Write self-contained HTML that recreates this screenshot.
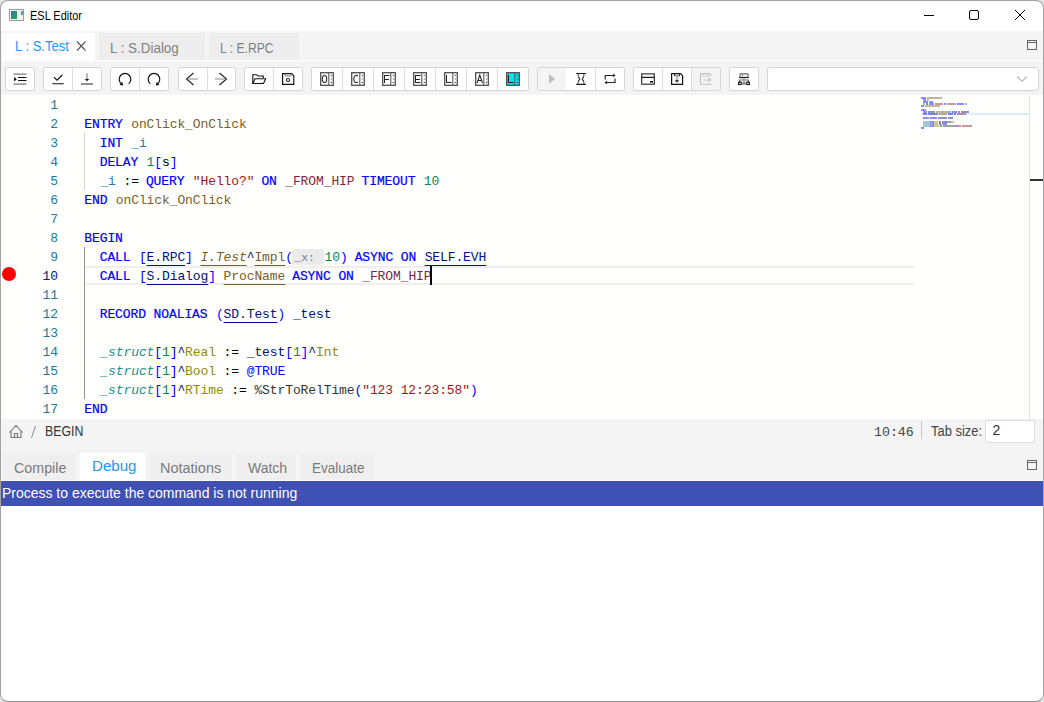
<!DOCTYPE html>
<html><head><meta charset="utf-8"><style>
html,body{margin:0;padding:0;width:1044px;height:702px;overflow:hidden;background:#e4e4e4;}
body{position:relative;font-family:"Liberation Sans",sans-serif;}
.abs{position:absolute;}
#win{position:absolute;left:0;top:0;width:1042px;height:700px;border:1px solid #a3a3a3;border-bottom-color:#8e8e8e;border-radius:8px;overflow:hidden;background:#fff;}
/* all children are positioned relative to page coords: win has border 1, so offset -1 */
#in{position:absolute;left:-1px;top:-1px;width:1044px;height:702px;}
.title{left:30px;top:7px;font-size:12.3px;color:#000;white-space:nowrap;}
.tabbar{left:0;top:31px;width:1044px;height:30px;background:#f4f4f4;}
.wline{left:0;top:60px;width:1044px;height:1px;background:#fff;}
.tab{top:33px;height:27px;background:#ededed;}
.tab.act{background:#fff;height:28px;}
.tabt{font-size:13.6px;color:#808080;white-space:nowrap;}
.tabt.act{color:#2196f3;}
.toolbar{left:0;top:61px;width:1044px;height:34px;background:#f4f4f4;}
.grp{top:67px;height:22px;border:1px solid #d4d4d4;border-radius:2.5px;background:#fff;overflow:hidden;}
.div{top:0;width:1px;height:22px;background:#dcdcdc;}
.dis{top:0;height:22px;background:#f4f4f4;}
.combo{left:767px;top:67px;width:270px;height:22px;border:1px solid #d4d4d4;border-radius:3px;background:#fff;}
.editor{left:0;top:95px;width:1044px;height:324px;background:#fffffe;overflow:hidden;}
.ln{position:absolute;left:85px;height:19px;line-height:19px;font-family:"Liberation Mono",monospace;font-size:13px;letter-spacing:-0.104px;white-space:pre;color:#000;padding-top:1px;box-sizing:border-box;}
.lnum{position:absolute;left:20px;width:38px;text-align:right;height:19px;line-height:19px;font-family:"Liberation Mono",monospace;font-size:13px;letter-spacing:-0.104px;color:#237893;padding-top:1px;box-sizing:border-box;}
.lnum.cur{color:#0b216f;}
.kw{color:#0000ff;font-weight:normal;-webkit-text-stroke:0.22px #0000ff;position:relative;left:-0.7px;}
.fn{color:#795e26;}
.var{color:#2a78b0;}
.num{color:#098658;}
.br{color:#0000ff;}
.str{color:#a31515;}
.mar{color:#811f3f;}
.navy{color:#001080;}
.uln{color:#001080;text-decoration:underline;text-decoration-thickness:1px;text-underline-offset:4px;}
.itb{color:#795e26;font-style:italic;text-decoration:underline;text-decoration-thickness:1px;text-underline-offset:4px;}
.ulb{color:#795e26;text-decoration:underline;text-decoration-thickness:1px;text-underline-offset:4px;}
.teal{color:#23908a;font-style:italic;}
.olv{color:#8f8c00;}
.at{color:#0000ff;}
.dark{color:#333;}
.hint{display:inline-block;box-sizing:border-box;background:#ebebeb;color:#7d7d7d;border-radius:3px;width:31.6px;margin-left:-0.6px;margin-right:0.6px;height:16px;line-height:16px;padding-top:1px;padding-left:2px;vertical-align:top;margin-top:1px;font-size:11.5px;letter-spacing:0;}
.mini{position:absolute;left:921px;top:95px;}
.status{left:0;top:419px;width:1044px;height:62px;background:#f4f4f4;}
.bluebar{left:0;top:481px;width:1044px;height:25px;background:#3f51b5;}
.btab{top:453px;height:27px;background:#efefef;}
.btab.act{background:#fff;}
.btabt{font-size:13.6px;color:#7a7a7a;white-space:nowrap;}
.btabt.act{color:#2196f3;}
.ui{font-size:13.6px;white-space:nowrap;}

.t{line-height:1;white-space:pre;transform-origin:0 0;}

</style></head><body>
<div id="win"><div id="in">
<!-- title bar -->
<svg class="abs" style="left:0;top:0" width="1044" height="31">
  <rect x="9.5" y="9.5" width="14" height="11" fill="#f4f4f4" stroke="#9a9a9a" stroke-width="1"/>
  <defs><linearGradient id="g1" x1="0" y1="0" x2="1" y2="1"><stop offset="0" stop-color="#3a6fb0"/><stop offset="1" stop-color="#22b04a"/></linearGradient></defs>
  <rect x="11" y="11" width="6" height="8" fill="url(#g1)"/>
  <rect x="21" y="11" width="2" height="4" fill="#4fa0a0"/>
  <rect x="18.5" y="12" width="2" height="1" fill="#ddd"/>
  <path d="M924 15.5H934" stroke="#000" stroke-width="1"/>
  <rect x="969.5" y="10.5" width="9" height="9" rx="1.5" fill="none" stroke="#000" stroke-width="1"/>
  <path d="M1015 10L1025 20M1025 10L1015 20" stroke="#000" stroke-width="1"/>
</svg>


<!-- tab bar -->
<div class="abs tabbar"></div>
<div class="abs wline"></div>
<div class="abs tab act" style="left:2px;width:93px"></div>
<div class="abs tab" style="left:99px;width:106px"></div>
<div class="abs tab" style="left:209px;width:90px"></div>



<svg class="abs" style="left:0;top:31px" width="1044" height="30">
  <path d="M77 10.5L85.5 19.5M85.5 10.5L77 19.5" stroke="#555" stroke-width="1.1"/>
  <rect x="1027.5" y="9.5" width="9" height="9" fill="none" stroke="#666" stroke-width="1"/>
  <path d="M1027.5 11.5H1036.5" stroke="#666" stroke-width="1"/>
</svg>

<!-- toolbar -->
<div class="abs toolbar"></div>
<div class="abs grp" style="left:5px;width:28px"></div>
<div class="abs grp" style="left:43px;width:57px"><div class="abs div" style="left:28px">
</div></div>
<div class="abs grp" style="left:110px;width:57px"><div class="abs div" style="left:28px">
</div></div>
<div class="abs grp" style="left:178px;width:56px"><div class="abs div" style="left:28px">
</div></div>
<div class="abs grp" style="left:244px;width:57px"><div class="abs div" style="left:28px">
</div></div>
<div class="abs grp" style="left:311px;width:216px">
  <div class="abs div" style="left:30px"></div><div class="abs div" style="left:61px"></div><div class="abs div" style="left:92px"></div>
  <div class="abs div" style="left:123px"></div><div class="abs div" style="left:154px"></div><div class="abs div" style="left:185px"></div>
</div>
<div class="abs grp" style="left:537px;width:86px"><div class="abs dis" style="left:0;width:28px"></div><div class="abs div" style="left:57px">
</div></div>
<div class="abs grp" style="left:633px;width:86px"><div class="abs div" style="left:28px"></div><div class="abs div" style="left:57px"></div><div class="abs dis" style="left:58px;width:28px">
</div></div>
<div class="abs grp" style="left:729px;width:28px"></div>
<div class="abs combo"></div>
<svg class="abs" style="left:0;top:0" width="1044" height="100" fill="none" stroke-linecap="butt">
 <!-- indent -->
 <path d="M13.5 74.2H26.5M13.5 84H26.5" stroke="#7a7a7a" stroke-width="1.25"/>
 <path d="M18 77.5H26.5M18 80.5H26.5" stroke="#111" stroke-width="1.1"/>
 <path d="M14 77V81.5L16.8 79.2Z" fill="#111"/>
 <!-- check underline -->
 <path d="M53.8 77.2L57 80.2L62.3 75" stroke="#111" stroke-width="1.1"/>
 <path d="M52.3 83.7H63.7" stroke="#111" stroke-width="1.1"/>
 <!-- arrow down line -->
 <path d="M87 73.3V79.5" stroke="#777" stroke-width="1.1"/>
 <path d="M84.8 79H89.2L87 81.3Z" fill="#111"/>
 <path d="M81 84H93" stroke="#222" stroke-width="1.2"/>
 <!-- undo / redo -->
 <path d="M128.7 83.7A5.8 5.8 0 1 0 121.3 83.7" stroke="#111" stroke-width="1.15"/>
 <path d="M123.2 85.4L119.6 85L122.2 81.8Z" fill="#111"/>
 <path d="M150.3 83.7A5.8 5.8 0 1 1 157.7 83.7" stroke="#111" stroke-width="1.15"/>
 <path d="M155.8 85.4L159.4 85L156.8 81.8Z" fill="#111"/>
 <!-- left/right arrows -->
 <path d="M193.5 73L186.5 79L193.5 85" stroke="#222" stroke-width="1.15"/>
 <path d="M187.5 79H198" stroke="#888" stroke-width="1.1"/>
 <path d="M219.5 73L226.5 79L219.5 85" stroke="#222" stroke-width="1.15"/>
 <path d="M215 79H225.5" stroke="#888" stroke-width="1.1"/>
 <!-- folder -->
 <path d="M252.8 83.5V74.7H256.5L258 76H263.3V78" stroke="#111" stroke-width="1.1"/>
 <path d="M252.8 83.5L255 78.7H265.7L263.5 83.5Z" stroke="#111" stroke-width="1.1" stroke-linejoin="round"/>
 <!-- floppy -->
 <path d="M282.6 73.6H291.7L293.8 75.7V84.3H282.6Z" stroke="#111" stroke-width="1.15"/>
 <path d="M285.2 73.6V75.9H291.1V73.6" stroke="#777" stroke-width="1"/>
 <circle cx="288" cy="80" r="1.6" stroke="#111" stroke-width="1"/>
 <!-- boxed letters -->
 <g stroke="#4a4a4a" stroke-width="1.25">
  <rect x="320.7" y="72.7" width="12.6" height="12.6"/>
  <rect x="351.7" y="72.7" width="12.6" height="12.6"/>
  <rect x="382.7" y="72.7" width="12.6" height="12.6"/>
  <rect x="413.7" y="72.7" width="12.6" height="12.6"/>
  <rect x="444.7" y="72.7" width="12.6" height="12.6"/>
  <rect x="475.7" y="72.7" width="12.6" height="12.6"/>
  <rect x="506.7" y="72.7" width="12.6" height="12.6" fill="#00e5ee"/>
 </g>
 <g stroke="#5a5a5a" stroke-width="1.1">
  <path d="M328.8 73V85M359.8 73V85M390.8 73V85M421.8 73V85M452.8 73V85M483.8 73V85M514.8 73V85"/>
 </g>
 <g fill="#222">
  <circle cx="331.3" cy="75.5" r=".6"/><circle cx="331.3" cy="79" r=".5"/><circle cx="331.3" cy="82.4" r=".6"/>
  <circle cx="362.3" cy="75.5" r=".6"/><circle cx="362.3" cy="79" r=".5"/><circle cx="362.3" cy="82.4" r=".6"/>
  <circle cx="393.3" cy="75.5" r=".6"/><circle cx="393.3" cy="79" r=".5"/><circle cx="393.3" cy="82.4" r=".6"/>
  <circle cx="424.3" cy="75.5" r=".6"/><circle cx="424.3" cy="79" r=".5"/><circle cx="424.3" cy="82.4" r=".6"/>
  <circle cx="455.3" cy="75.5" r=".6"/><circle cx="455.3" cy="79" r=".5"/><circle cx="455.3" cy="82.4" r=".6"/>
  <circle cx="486.3" cy="75.5" r=".6"/><circle cx="486.3" cy="79" r=".5"/><circle cx="486.3" cy="82.4" r=".6"/>
  <circle cx="517.3" cy="75.5" r=".6"/><circle cx="517.3" cy="79" r=".5"/><circle cx="517.3" cy="82.4" r=".6"/>
 </g>
 <g fill="none" stroke="#222" stroke-width="1.05">
  <ellipse cx="324.5" cy="79" rx="2.2" ry="3.5"/>
  <path d="M357.8 76.2A2.5 3.6 0 1 0 357.8 81.8"/>
  <path d="M384.5 83V75.5H389.5 M384.5 79.5H389.0"/>
  <path d="M420.5 75.5H415.5V82.5H420.5 M415.5 79.5H420.0"/>
  <path d="M446.5 75V82.5H451.5"/>
  <path d="M477.1 83.2L479.8 75L482.5 83.2M478.0 80.5H481.6"/>
  <path d="M508.5 75V82.5H513.5"/>
 </g>
 <!-- play disabled -->
 <path d="M549 74V83.8L555 78.9Z" fill="#bdbdbd"/>
 <!-- hourglass -->
 <path d="M576.3 73.5H586M576.3 84.4H586" stroke="#1a1a1a" stroke-width="1.2"/>
 <path d="M578.1 74C578 77.3 579.6 77.8 579.6 79C579.6 80.2 578 80.7 578.1 84M583.9 74C584 77.3 582.4 77.8 582.4 79C582.4 80.2 584 80.7 583.9 84" stroke="#7a7a7a" stroke-width="1.5"/>
 <g fill="#111"><circle cx="578.5" cy="77.4" r=".5"/><circle cx="579.6" cy="79" r=".6"/><circle cx="578.5" cy="80.6" r=".5"/><circle cx="583.5" cy="77.4" r=".5"/><circle cx="582.4" cy="79" r=".6"/><circle cx="583.5" cy="80.6" r=".5"/></g>
 <!-- repeat -->
 <path d="M605.2 79.5V75.5H614.3M615 78.5V82.5H605.8" stroke="#222" stroke-width="1.15"/>
 <path d="M613.3 73.8L615.6 75.5L613.3 77.2Z M606.8 80.8L604.5 82.5L606.8 84.2Z" fill="#111"/>
 <!-- card -->
 <rect x="641.7" y="73.9" width="12.6" height="10.3" stroke="#222" stroke-width="1.1"/>
 <path d="M641.7 77.4H654.3" stroke="#1a1a1a" stroke-width="1.1"/>
 <rect x="650" y="81" width="3" height="1.6" fill="#111"/>
 <!-- floppy T -->
 <path d="M671.6 73.6H680.6L682.6 75.6V84.4H671.6Z" stroke="#111" stroke-width="1.2" stroke-linejoin="round"/>
 <path d="M674.6 73.6V76.2M679.4 73.6V76.2" stroke="#222" stroke-width="1"/>
 <path d="M675 75.8H679M677 76V80.5" stroke="#777" stroke-width="1.1"/>
 <path d="M674.8 80.2H679.2L677 82.6Z" fill="#111"/>
 <!-- disabled floppy arrow -->
 <path d="M700.5 84.3V73.6H709.5L711.6 75.7" stroke="#c2c2c2" stroke-width="1.1"/>
 <path d="M700.5 84.3H711.8" stroke="#c2c2c2" stroke-width="1.1"/>
 <path d="M703.6 73.6V76H708.6V73.6" stroke="#cfcfcf" stroke-width="1.1"/>
 <path d="M703.4 80H710.2M708.5 78L710.6 80L708.5 82" stroke="#c4c4c4" stroke-width="1.1"/>
 <!-- hierarchy -->
 <rect x="739.9" y="73.9" width="8.2" height="3.6" rx="0.8" stroke="#8d8d8d" stroke-width="1.6"/>
 <path d="M739.2 77.5H748.8" stroke="#1a1a1a" stroke-width="1.1"/>
 <rect x="742" y="74.9" width="0.9" height="0.9" fill="#333"/>
 <path d="M744 78V82" stroke="#999" stroke-width="1.2"/>
 <path d="M739.2 80H748.8" stroke="#999" stroke-width="1.4"/>
 <path d="M739.6 80.5V82.2M748.4 80.5V82.2" stroke="#111" stroke-width="1"/>
 <rect x="738.6" y="82.2" width="2.6" height="2.3" stroke="#111" stroke-width="1.1"/>
 <rect x="742.2" y="81.8" width="3.6" height="3.1" fill="#8e8e8e"/>
 <rect x="746.8" y="82.2" width="2.6" height="2.3" stroke="#111" stroke-width="1.1"/>
 <!-- combo chevron -->
 <path d="M1017.3 76.5L1022 81.5L1026.7 76.5" stroke="#b8b8b8" stroke-width="1.1"/>
</svg>


<!-- editor -->
<div class="abs editor"></div>
<div class="abs" style="left:86px;top:266px;width:828px;height:19px;box-sizing:border-box;border-top:2px solid #eeeeee;border-bottom:2px solid #eeeeee"></div>
<div class="abs" style="left:84px;top:133px;width:1px;height:57px;background:#d3d3d3"></div>
<div class="abs" style="left:84px;top:247px;width:1px;height:152px;background:#939393"></div>
<div class="abs" style="left:2px;top:267px;width:14px;height:14px;border-radius:50%;background:#ff0000"></div>
<div class="ln" style="top:95px"></div>
<div class="lnum" style="top:95px">1</div>
<div class="ln" style="top:114px"><span class="kw">ENTRY</span><span class="blk"> </span><span class="fn">onClick_OnClick</span></div>
<div class="lnum" style="top:114px">2</div>
<div class="ln" style="top:133px"><span class="blk">  </span><span class="kw">INT</span><span class="blk"> </span><span class="var">_i</span></div>
<div class="lnum" style="top:133px">3</div>
<div class="ln" style="top:152px"><span class="blk">  </span><span class="kw">DELAY</span><span class="blk"> </span><span class="num">1</span><span class="br">[</span><span class="blk">s</span><span class="br">]</span></div>
<div class="lnum" style="top:152px">4</div>
<div class="ln" style="top:171px"><span class="blk">  </span><span class="var">_i</span><span class="blk"> := </span><span class="kw">QUERY</span><span class="blk"> </span><span class="str">&quot;Hello?&quot;</span><span class="blk"> </span><span class="kw">ON</span><span class="blk"> </span><span class="mar">_FROM_HIP</span><span class="blk"> </span><span class="kw">TIMEOUT</span><span class="blk"> </span><span class="num">10</span></div>
<div class="lnum" style="top:171px">5</div>
<div class="ln" style="top:190px"><span class="kw">END</span><span class="blk"> </span><span class="fn">onClick_OnClick</span></div>
<div class="lnum" style="top:190px">6</div>
<div class="ln" style="top:209px"></div>
<div class="lnum" style="top:209px">7</div>
<div class="ln" style="top:228px"><span class="kw">BEGIN</span></div>
<div class="lnum" style="top:228px">8</div>
<div class="ln" style="top:247px"><span class="blk">  </span><span class="kw">CALL</span><span class="blk"> </span><span class="br">[</span><span class="uln">E.RPC</span><span class="br">]</span><span class="blk"> </span><span class="itb">I.Test</span><span class="navy">^</span><span class="ulb">Impl</span><span class="br">(</span><span class="hint">_x: </span><span class="num">10</span><span class="br">)</span><span class="blk"> </span><span class="kw">ASYNC</span><span class="blk"> </span><span class="kw">ON</span><span class="blk"> </span><span class="uln">SELF.EVH</span></div>
<div class="lnum" style="top:247px">9</div>
<div class="ln" style="top:266px"><span class="blk">  </span><span class="kw">CALL</span><span class="blk"> </span><span class="br">[</span><span class="uln">S.Dialog</span><span class="br">]</span><span class="blk"> </span><span class="ulb">ProcName</span><span class="blk"> </span><span class="kw">ASYNC</span><span class="blk"> </span><span class="kw">ON</span><span class="blk"> </span><span class="mar">_FROM_HIP</span></div>
<div class="lnum cur" style="top:266px">10</div>
<div class="ln" style="top:285px"></div>
<div class="lnum" style="top:285px">11</div>
<div class="ln" style="top:304px"><span class="blk">  </span><span class="kw">RECORD</span><span class="blk"> </span><span class="kw">NOALIAS</span><span class="blk"> </span><span class="br">(</span><span class="uln">SD.Test</span><span class="br">)</span><span class="blk"> </span><span class="navy">_test</span></div>
<div class="lnum" style="top:304px">12</div>
<div class="ln" style="top:323px"></div>
<div class="lnum" style="top:323px">13</div>
<div class="ln" style="top:342px"><span class="blk">  </span><span class="teal">_struct</span><span class="br">[</span><span class="num">1</span><span class="br">]</span><span class="navy">^</span><span class="olv">Real</span><span class="blk"> := </span><span class="navy">_test</span><span class="br">[</span><span class="num">1</span><span class="br">]</span><span class="navy">^</span><span class="olv">Int</span></div>
<div class="lnum" style="top:342px">14</div>
<div class="ln" style="top:361px"><span class="blk">  </span><span class="teal">_struct</span><span class="br">[</span><span class="num">1</span><span class="br">]</span><span class="navy">^</span><span class="olv">Bool</span><span class="blk"> := </span><span class="at">@TRUE</span></div>
<div class="lnum" style="top:361px">15</div>
<div class="ln" style="top:380px"><span class="blk">  </span><span class="teal">_struct</span><span class="br">[</span><span class="num">1</span><span class="br">]</span><span class="navy">^</span><span class="olv">RTime</span><span class="blk"> := </span><span class="dark">%StrToRelTime</span><span class="br">(</span><span class="str">&quot;123 12:23:58&quot;</span><span class="br">)</span></div>
<div class="lnum" style="top:380px">16</div>
<div class="ln" style="top:399px"><span class="kw">END</span></div>
<div class="lnum" style="top:399px">17</div>
<div class="abs" style="left:430px;top:266px;width:2px;height:19px;background:#000"></div>
<svg class="mini" width="108" height="40" viewBox="0 0 108 40" ><rect x="0" y="18" width="108" height="2" fill="#dceafc"/><g opacity="0.45" shape-rendering="crispEdges"><rect x="0" y="2" width="1" height="2" fill="#0000ff"/><rect x="1" y="2" width="1" height="2" fill="#0000ff"/><rect x="2" y="2" width="1" height="2" fill="#0000ff"/><rect x="3" y="2" width="1" height="2" fill="#0000ff"/><rect x="4" y="2" width="1" height="2" fill="#0000ff"/><rect x="6" y="2" width="1" height="2" fill="#795e26"/><rect x="7" y="2" width="1" height="2" fill="#795e26"/><rect x="8" y="2" width="1" height="2" fill="#795e26"/><rect x="9" y="2" width="1" height="2" fill="#795e26"/><rect x="10" y="2" width="1" height="2" fill="#795e26"/><rect x="11" y="2" width="1" height="2" fill="#795e26"/><rect x="12" y="2" width="1" height="2" fill="#795e26"/><rect x="13" y="2" width="1" height="2" fill="#795e26"/><rect x="14" y="2" width="1" height="2" fill="#795e26"/><rect x="15" y="2" width="1" height="2" fill="#795e26"/><rect x="16" y="2" width="1" height="2" fill="#795e26"/><rect x="17" y="2" width="1" height="2" fill="#795e26"/><rect x="18" y="2" width="1" height="2" fill="#795e26"/><rect x="19" y="2" width="1" height="2" fill="#795e26"/><rect x="20" y="2" width="1" height="2" fill="#795e26"/><rect x="2" y="4" width="1" height="2" fill="#0000ff"/><rect x="3" y="4" width="1" height="2" fill="#0000ff"/><rect x="4" y="4" width="1" height="2" fill="#0000ff"/><rect x="6" y="4" width="1" height="2" fill="#2a78b0"/><rect x="7" y="4" width="1" height="2" fill="#2a78b0"/><rect x="2" y="6" width="1" height="2" fill="#0000ff"/><rect x="3" y="6" width="1" height="2" fill="#0000ff"/><rect x="4" y="6" width="1" height="2" fill="#0000ff"/><rect x="5" y="6" width="1" height="2" fill="#0000ff"/><rect x="6" y="6" width="1" height="2" fill="#0000ff"/><rect x="8" y="6" width="1" height="2" fill="#098658"/><rect x="9" y="6" width="1" height="2" fill="#0000ff"/><rect x="10" y="6" width="1" height="2" fill="#000000"/><rect x="11" y="6" width="1" height="2" fill="#0000ff"/><rect x="2" y="8" width="1" height="2" fill="#2a78b0"/><rect x="3" y="8" width="1" height="2" fill="#2a78b0"/><rect x="5" y="8" width="1" height="2" fill="#000000"/><rect x="6" y="8" width="1" height="2" fill="#000000"/><rect x="8" y="8" width="1" height="2" fill="#0000ff"/><rect x="9" y="8" width="1" height="2" fill="#0000ff"/><rect x="10" y="8" width="1" height="2" fill="#0000ff"/><rect x="11" y="8" width="1" height="2" fill="#0000ff"/><rect x="12" y="8" width="1" height="2" fill="#0000ff"/><rect x="14" y="8" width="1" height="2" fill="#a31515"/><rect x="15" y="8" width="1" height="2" fill="#a31515"/><rect x="16" y="8" width="1" height="2" fill="#a31515"/><rect x="17" y="8" width="1" height="2" fill="#a31515"/><rect x="18" y="8" width="1" height="2" fill="#a31515"/><rect x="19" y="8" width="1" height="2" fill="#a31515"/><rect x="20" y="8" width="1" height="2" fill="#a31515"/><rect x="21" y="8" width="1" height="2" fill="#a31515"/><rect x="23" y="8" width="1" height="2" fill="#0000ff"/><rect x="24" y="8" width="1" height="2" fill="#0000ff"/><rect x="26" y="8" width="1" height="2" fill="#811f3f"/><rect x="27" y="8" width="1" height="2" fill="#811f3f"/><rect x="28" y="8" width="1" height="2" fill="#811f3f"/><rect x="29" y="8" width="1" height="2" fill="#811f3f"/><rect x="30" y="8" width="1" height="2" fill="#811f3f"/><rect x="31" y="8" width="1" height="2" fill="#811f3f"/><rect x="32" y="8" width="1" height="2" fill="#811f3f"/><rect x="33" y="8" width="1" height="2" fill="#811f3f"/><rect x="34" y="8" width="1" height="2" fill="#811f3f"/><rect x="36" y="8" width="1" height="2" fill="#0000ff"/><rect x="37" y="8" width="1" height="2" fill="#0000ff"/><rect x="38" y="8" width="1" height="2" fill="#0000ff"/><rect x="39" y="8" width="1" height="2" fill="#0000ff"/><rect x="40" y="8" width="1" height="2" fill="#0000ff"/><rect x="41" y="8" width="1" height="2" fill="#0000ff"/><rect x="42" y="8" width="1" height="2" fill="#0000ff"/><rect x="44" y="8" width="1" height="2" fill="#098658"/><rect x="45" y="8" width="1" height="2" fill="#098658"/><rect x="0" y="10" width="1" height="2" fill="#0000ff"/><rect x="1" y="10" width="1" height="2" fill="#0000ff"/><rect x="2" y="10" width="1" height="2" fill="#0000ff"/><rect x="4" y="10" width="1" height="2" fill="#795e26"/><rect x="5" y="10" width="1" height="2" fill="#795e26"/><rect x="6" y="10" width="1" height="2" fill="#795e26"/><rect x="7" y="10" width="1" height="2" fill="#795e26"/><rect x="8" y="10" width="1" height="2" fill="#795e26"/><rect x="9" y="10" width="1" height="2" fill="#795e26"/><rect x="10" y="10" width="1" height="2" fill="#795e26"/><rect x="11" y="10" width="1" height="2" fill="#795e26"/><rect x="12" y="10" width="1" height="2" fill="#795e26"/><rect x="13" y="10" width="1" height="2" fill="#795e26"/><rect x="14" y="10" width="1" height="2" fill="#795e26"/><rect x="15" y="10" width="1" height="2" fill="#795e26"/><rect x="16" y="10" width="1" height="2" fill="#795e26"/><rect x="17" y="10" width="1" height="2" fill="#795e26"/><rect x="18" y="10" width="1" height="2" fill="#795e26"/><rect x="0" y="14" width="1" height="2" fill="#0000ff"/><rect x="1" y="14" width="1" height="2" fill="#0000ff"/><rect x="2" y="14" width="1" height="2" fill="#0000ff"/><rect x="3" y="14" width="1" height="2" fill="#0000ff"/><rect x="4" y="14" width="1" height="2" fill="#0000ff"/><rect x="2" y="16" width="1" height="2" fill="#0000ff"/><rect x="3" y="16" width="1" height="2" fill="#0000ff"/><rect x="4" y="16" width="1" height="2" fill="#0000ff"/><rect x="5" y="16" width="1" height="2" fill="#0000ff"/><rect x="7" y="16" width="1" height="2" fill="#0000ff"/><rect x="8" y="16" width="1" height="2" fill="#001080"/><rect x="9" y="16" width="1" height="2" fill="#001080"/><rect x="10" y="16" width="1" height="2" fill="#001080"/><rect x="11" y="16" width="1" height="2" fill="#001080"/><rect x="12" y="16" width="1" height="2" fill="#001080"/><rect x="13" y="16" width="1" height="2" fill="#0000ff"/><rect x="15" y="16" width="1" height="2" fill="#795e26"/><rect x="16" y="16" width="1" height="2" fill="#795e26"/><rect x="17" y="16" width="1" height="2" fill="#795e26"/><rect x="18" y="16" width="1" height="2" fill="#795e26"/><rect x="19" y="16" width="1" height="2" fill="#795e26"/><rect x="20" y="16" width="1" height="2" fill="#795e26"/><rect x="21" y="16" width="1" height="2" fill="#001080"/><rect x="22" y="16" width="1" height="2" fill="#795e26"/><rect x="23" y="16" width="1" height="2" fill="#795e26"/><rect x="24" y="16" width="1" height="2" fill="#795e26"/><rect x="25" y="16" width="1" height="2" fill="#795e26"/><rect x="26" y="16" width="1" height="2" fill="#0000ff"/><rect x="27" y="16" width="1" height="2" fill="#098658"/><rect x="28" y="16" width="1" height="2" fill="#098658"/><rect x="29" y="16" width="1" height="2" fill="#0000ff"/><rect x="31" y="16" width="1" height="2" fill="#0000ff"/><rect x="32" y="16" width="1" height="2" fill="#0000ff"/><rect x="33" y="16" width="1" height="2" fill="#0000ff"/><rect x="34" y="16" width="1" height="2" fill="#0000ff"/><rect x="35" y="16" width="1" height="2" fill="#0000ff"/><rect x="37" y="16" width="1" height="2" fill="#0000ff"/><rect x="38" y="16" width="1" height="2" fill="#0000ff"/><rect x="40" y="16" width="1" height="2" fill="#001080"/><rect x="41" y="16" width="1" height="2" fill="#001080"/><rect x="42" y="16" width="1" height="2" fill="#001080"/><rect x="43" y="16" width="1" height="2" fill="#001080"/><rect x="44" y="16" width="1" height="2" fill="#001080"/><rect x="45" y="16" width="1" height="2" fill="#001080"/><rect x="46" y="16" width="1" height="2" fill="#001080"/><rect x="47" y="16" width="1" height="2" fill="#001080"/><rect x="2" y="18" width="1" height="2" fill="#0000ff"/><rect x="3" y="18" width="1" height="2" fill="#0000ff"/><rect x="4" y="18" width="1" height="2" fill="#0000ff"/><rect x="5" y="18" width="1" height="2" fill="#0000ff"/><rect x="7" y="18" width="1" height="2" fill="#0000ff"/><rect x="8" y="18" width="1" height="2" fill="#001080"/><rect x="9" y="18" width="1" height="2" fill="#001080"/><rect x="10" y="18" width="1" height="2" fill="#001080"/><rect x="11" y="18" width="1" height="2" fill="#001080"/><rect x="12" y="18" width="1" height="2" fill="#001080"/><rect x="13" y="18" width="1" height="2" fill="#001080"/><rect x="14" y="18" width="1" height="2" fill="#001080"/><rect x="15" y="18" width="1" height="2" fill="#001080"/><rect x="16" y="18" width="1" height="2" fill="#0000ff"/><rect x="18" y="18" width="1" height="2" fill="#795e26"/><rect x="19" y="18" width="1" height="2" fill="#795e26"/><rect x="20" y="18" width="1" height="2" fill="#795e26"/><rect x="21" y="18" width="1" height="2" fill="#795e26"/><rect x="22" y="18" width="1" height="2" fill="#795e26"/><rect x="23" y="18" width="1" height="2" fill="#795e26"/><rect x="24" y="18" width="1" height="2" fill="#795e26"/><rect x="25" y="18" width="1" height="2" fill="#795e26"/><rect x="27" y="18" width="1" height="2" fill="#0000ff"/><rect x="28" y="18" width="1" height="2" fill="#0000ff"/><rect x="29" y="18" width="1" height="2" fill="#0000ff"/><rect x="30" y="18" width="1" height="2" fill="#0000ff"/><rect x="31" y="18" width="1" height="2" fill="#0000ff"/><rect x="33" y="18" width="1" height="2" fill="#0000ff"/><rect x="34" y="18" width="1" height="2" fill="#0000ff"/><rect x="36" y="18" width="1" height="2" fill="#811f3f"/><rect x="37" y="18" width="1" height="2" fill="#811f3f"/><rect x="38" y="18" width="1" height="2" fill="#811f3f"/><rect x="39" y="18" width="1" height="2" fill="#811f3f"/><rect x="40" y="18" width="1" height="2" fill="#811f3f"/><rect x="41" y="18" width="1" height="2" fill="#811f3f"/><rect x="42" y="18" width="1" height="2" fill="#811f3f"/><rect x="43" y="18" width="1" height="2" fill="#811f3f"/><rect x="44" y="18" width="1" height="2" fill="#811f3f"/><rect x="2" y="22" width="1" height="2" fill="#0000ff"/><rect x="3" y="22" width="1" height="2" fill="#0000ff"/><rect x="4" y="22" width="1" height="2" fill="#0000ff"/><rect x="5" y="22" width="1" height="2" fill="#0000ff"/><rect x="6" y="22" width="1" height="2" fill="#0000ff"/><rect x="7" y="22" width="1" height="2" fill="#0000ff"/><rect x="9" y="22" width="1" height="2" fill="#0000ff"/><rect x="10" y="22" width="1" height="2" fill="#0000ff"/><rect x="11" y="22" width="1" height="2" fill="#0000ff"/><rect x="12" y="22" width="1" height="2" fill="#0000ff"/><rect x="13" y="22" width="1" height="2" fill="#0000ff"/><rect x="14" y="22" width="1" height="2" fill="#0000ff"/><rect x="15" y="22" width="1" height="2" fill="#0000ff"/><rect x="17" y="22" width="1" height="2" fill="#0000ff"/><rect x="18" y="22" width="1" height="2" fill="#001080"/><rect x="19" y="22" width="1" height="2" fill="#001080"/><rect x="20" y="22" width="1" height="2" fill="#001080"/><rect x="21" y="22" width="1" height="2" fill="#001080"/><rect x="22" y="22" width="1" height="2" fill="#001080"/><rect x="23" y="22" width="1" height="2" fill="#001080"/><rect x="24" y="22" width="1" height="2" fill="#001080"/><rect x="25" y="22" width="1" height="2" fill="#0000ff"/><rect x="27" y="22" width="1" height="2" fill="#001080"/><rect x="28" y="22" width="1" height="2" fill="#001080"/><rect x="29" y="22" width="1" height="2" fill="#001080"/><rect x="30" y="22" width="1" height="2" fill="#001080"/><rect x="31" y="22" width="1" height="2" fill="#001080"/><rect x="2" y="26" width="1" height="2" fill="#23908a"/><rect x="3" y="26" width="1" height="2" fill="#23908a"/><rect x="4" y="26" width="1" height="2" fill="#23908a"/><rect x="5" y="26" width="1" height="2" fill="#23908a"/><rect x="6" y="26" width="1" height="2" fill="#23908a"/><rect x="7" y="26" width="1" height="2" fill="#23908a"/><rect x="8" y="26" width="1" height="2" fill="#23908a"/><rect x="9" y="26" width="1" height="2" fill="#0000ff"/><rect x="10" y="26" width="1" height="2" fill="#098658"/><rect x="11" y="26" width="1" height="2" fill="#0000ff"/><rect x="12" y="26" width="1" height="2" fill="#001080"/><rect x="13" y="26" width="1" height="2" fill="#8f8c00"/><rect x="14" y="26" width="1" height="2" fill="#8f8c00"/><rect x="15" y="26" width="1" height="2" fill="#8f8c00"/><rect x="16" y="26" width="1" height="2" fill="#8f8c00"/><rect x="18" y="26" width="1" height="2" fill="#000000"/><rect x="19" y="26" width="1" height="2" fill="#000000"/><rect x="21" y="26" width="1" height="2" fill="#001080"/><rect x="22" y="26" width="1" height="2" fill="#001080"/><rect x="23" y="26" width="1" height="2" fill="#001080"/><rect x="24" y="26" width="1" height="2" fill="#001080"/><rect x="25" y="26" width="1" height="2" fill="#001080"/><rect x="26" y="26" width="1" height="2" fill="#0000ff"/><rect x="27" y="26" width="1" height="2" fill="#098658"/><rect x="28" y="26" width="1" height="2" fill="#0000ff"/><rect x="29" y="26" width="1" height="2" fill="#001080"/><rect x="30" y="26" width="1" height="2" fill="#8f8c00"/><rect x="31" y="26" width="1" height="2" fill="#8f8c00"/><rect x="32" y="26" width="1" height="2" fill="#8f8c00"/><rect x="2" y="28" width="1" height="2" fill="#23908a"/><rect x="3" y="28" width="1" height="2" fill="#23908a"/><rect x="4" y="28" width="1" height="2" fill="#23908a"/><rect x="5" y="28" width="1" height="2" fill="#23908a"/><rect x="6" y="28" width="1" height="2" fill="#23908a"/><rect x="7" y="28" width="1" height="2" fill="#23908a"/><rect x="8" y="28" width="1" height="2" fill="#23908a"/><rect x="9" y="28" width="1" height="2" fill="#0000ff"/><rect x="10" y="28" width="1" height="2" fill="#098658"/><rect x="11" y="28" width="1" height="2" fill="#0000ff"/><rect x="12" y="28" width="1" height="2" fill="#001080"/><rect x="13" y="28" width="1" height="2" fill="#8f8c00"/><rect x="14" y="28" width="1" height="2" fill="#8f8c00"/><rect x="15" y="28" width="1" height="2" fill="#8f8c00"/><rect x="16" y="28" width="1" height="2" fill="#8f8c00"/><rect x="18" y="28" width="1" height="2" fill="#000000"/><rect x="19" y="28" width="1" height="2" fill="#000000"/><rect x="21" y="28" width="1" height="2" fill="#0000ff"/><rect x="22" y="28" width="1" height="2" fill="#0000ff"/><rect x="23" y="28" width="1" height="2" fill="#0000ff"/><rect x="24" y="28" width="1" height="2" fill="#0000ff"/><rect x="25" y="28" width="1" height="2" fill="#0000ff"/><rect x="2" y="30" width="1" height="2" fill="#23908a"/><rect x="3" y="30" width="1" height="2" fill="#23908a"/><rect x="4" y="30" width="1" height="2" fill="#23908a"/><rect x="5" y="30" width="1" height="2" fill="#23908a"/><rect x="6" y="30" width="1" height="2" fill="#23908a"/><rect x="7" y="30" width="1" height="2" fill="#23908a"/><rect x="8" y="30" width="1" height="2" fill="#23908a"/><rect x="9" y="30" width="1" height="2" fill="#0000ff"/><rect x="10" y="30" width="1" height="2" fill="#098658"/><rect x="11" y="30" width="1" height="2" fill="#0000ff"/><rect x="12" y="30" width="1" height="2" fill="#001080"/><rect x="13" y="30" width="1" height="2" fill="#8f8c00"/><rect x="14" y="30" width="1" height="2" fill="#8f8c00"/><rect x="15" y="30" width="1" height="2" fill="#8f8c00"/><rect x="16" y="30" width="1" height="2" fill="#8f8c00"/><rect x="17" y="30" width="1" height="2" fill="#8f8c00"/><rect x="19" y="30" width="1" height="2" fill="#000000"/><rect x="20" y="30" width="1" height="2" fill="#000000"/><rect x="22" y="30" width="1" height="2" fill="#333333"/><rect x="23" y="30" width="1" height="2" fill="#333333"/><rect x="24" y="30" width="1" height="2" fill="#333333"/><rect x="25" y="30" width="1" height="2" fill="#333333"/><rect x="26" y="30" width="1" height="2" fill="#333333"/><rect x="27" y="30" width="1" height="2" fill="#333333"/><rect x="28" y="30" width="1" height="2" fill="#333333"/><rect x="29" y="30" width="1" height="2" fill="#333333"/><rect x="30" y="30" width="1" height="2" fill="#333333"/><rect x="31" y="30" width="1" height="2" fill="#333333"/><rect x="32" y="30" width="1" height="2" fill="#333333"/><rect x="33" y="30" width="1" height="2" fill="#333333"/><rect x="34" y="30" width="1" height="2" fill="#333333"/><rect x="35" y="30" width="1" height="2" fill="#0000ff"/><rect x="36" y="30" width="1" height="2" fill="#a31515"/><rect x="37" y="30" width="1" height="2" fill="#a31515"/><rect x="38" y="30" width="1" height="2" fill="#a31515"/><rect x="39" y="30" width="1" height="2" fill="#a31515"/><rect x="41" y="30" width="1" height="2" fill="#a31515"/><rect x="42" y="30" width="1" height="2" fill="#a31515"/><rect x="43" y="30" width="1" height="2" fill="#a31515"/><rect x="44" y="30" width="1" height="2" fill="#a31515"/><rect x="45" y="30" width="1" height="2" fill="#a31515"/><rect x="46" y="30" width="1" height="2" fill="#a31515"/><rect x="47" y="30" width="1" height="2" fill="#a31515"/><rect x="48" y="30" width="1" height="2" fill="#a31515"/><rect x="49" y="30" width="1" height="2" fill="#a31515"/><rect x="50" y="30" width="1" height="2" fill="#0000ff"/><rect x="0" y="32" width="1" height="2" fill="#0000ff"/><rect x="1" y="32" width="1" height="2" fill="#0000ff"/><rect x="2" y="32" width="1" height="2" fill="#0000ff"/></g></svg>
<div class="abs" style="left:1029px;top:95px;width:1px;height:324px;background:#e3e3e3"></div>
<div class="abs" style="left:1030px;top:179px;width:13px;height:2px;background:#333"></div>

<!-- status -->
<div class="abs status"></div>
<svg class="abs" style="left:0;top:419px" width="60" height="26">
  <path d="M9.5 13.5L16 6.5L22.5 13.5M11 12V18.5H21V12M14.5 18.5V14.5H17.5V18.5" fill="none" stroke="#777" stroke-width="1.1"/>
  <path d="M35.5 7L31.5 19" stroke="#888" stroke-width="1"/>
</svg>


<div class="abs" style="left:921px;top:421px;width:1px;height:18px;background:#c8c8c8"></div>

<div class="abs" style="left:985px;top:420px;width:48px;height:21px;background:#fff;border:1px solid #dcdcdc;border-radius:2px"></div>


<!-- bottom tabs -->
<div class="abs btab" style="left:3px;width:73px"></div>
<div class="abs btab act" style="left:80px;width:65px"></div>
<div class="abs btab" style="left:149px;width:83px"></div>
<div class="abs btab" style="left:236px;width:60px"></div>
<div class="abs btab" style="left:300px;width:74px"></div>
<div class="abs" style="left:0;top:480px;width:1044px;height:1px;background:#fff"></div>





<svg class="abs" style="left:1020px;top:455px" width="24" height="20">
  <rect x="7.5" y="5.5" width="9" height="9" fill="none" stroke="#666" stroke-width="1"/>
  <path d="M7.5 7.5H16.5" stroke="#666" stroke-width="1"/>
</svg>
<div class="abs bluebar"></div>

<div class="abs t" style="left:29.84px;top:10.00px;font-family:'Liberation Sans';font-size:12.7px;color:#000;transform:scaleX(0.8644)">ESL Editor</div>
<div class="abs t" style="left:14.97px;top:39.00px;font-family:'Liberation Sans';font-size:14px;color:#2196f3;transform:scaleX(0.9316)">L : S.Test</div>
<div class="abs t" style="left:110.04px;top:41.20px;font-family:'Liberation Sans';font-size:14px;color:#808080;transform:scaleX(0.9571)">L : S.Dialog</div>
<div class="abs t" style="left:220.13px;top:40.90px;font-family:'Liberation Sans';font-size:14px;color:#808080;transform:scaleX(0.8667)">L : E.RPC</div>
<div class="abs t" style="left:44.62px;top:423.90px;font-family:'Liberation Sans';font-size:14px;color:#333;transform:scaleX(0.8810)">BEGIN</div>
<div class="abs t" style="left:930.70px;top:423.70px;font-family:'Liberation Sans';font-size:14px;color:#444;transform:scaleX(0.9241)">Tab size:</div>
<div class="abs t" style="left:992.60px;top:423.00px;font-family:'Liberation Sans';font-size:14px;color:#333;transform:scaleX(1.0000)">2</div>
<div class="abs t" style="left:1.50px;top:485.90px;font-family:'Liberation Sans';font-size:14px;color:#fff;transform:scaleX(0.9983)">Process to execute the command is not running</div>
<div class="abs t" style="left:13.98px;top:461.00px;font-family:'Liberation Sans';font-size:14px;color:#7a7a7a;transform:scaleX(1.0200)">Compile</div>
<div class="abs t" style="left:91.92px;top:458.80px;font-family:'Liberation Sans';font-size:14px;color:#2196f3;transform:scaleX(1.0769)">Debug</div>
<div class="abs t" style="left:159.97px;top:461.00px;font-family:'Liberation Sans';font-size:14px;color:#7a7a7a;transform:scaleX(1.0345)">Notations</div>
<div class="abs t" style="left:248.00px;top:461.00px;font-family:'Liberation Sans';font-size:14px;color:#7a7a7a;transform:scaleX(1.0000)">Watch</div>
<div class="abs t" style="left:312.04px;top:461.00px;font-family:'Liberation Sans';font-size:14px;color:#7a7a7a;transform:scaleX(0.9623)">Evaluate</div>
<div class="abs t" style="left:873.98px;top:426.00px;font-family:'Liberation Mono';font-size:13px;color:#444;transform:scaleX(1.0189)">10:46</div>
</div></div>

</body></html>
